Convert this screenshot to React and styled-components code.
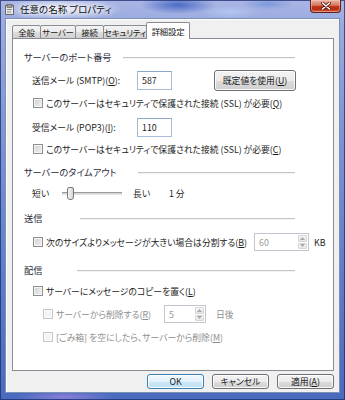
import React from 'react';
import styled, { createGlobalStyle } from 'styled-components';

const Global = createGlobalStyle`
  html, body { margin: 0; padding: 0; width: 345px; height: 400px; overflow: hidden; background: #ffffff; }
  body { font-family: "Noto Sans CJK JP", "Noto Sans", sans-serif; font-size: 8.8px; color: #1e1e1e; }
  * { box-sizing: border-box; }
`;

const Window = styled.div`
  width: 345px;
  height: 400px;
  display: flex;
  flex-direction: column;
  padding: 0 5px 7px 5px;
  box-shadow: inset 0 0 0 1px rgba(25, 45, 110, 0.75);
  background:
    radial-gradient(ellipse 62px 11px at 62px 9px, rgba(255,255,255,0.75), rgba(255,255,255,0) 100%),
    radial-gradient(ellipse 38px 9px at 178px 5px, #4b6bc6, rgba(75,107,198,0) 100%),
    radial-gradient(ellipse 30px 7px at 230px 12px, rgba(180,200,245,0.9), rgba(180,200,245,0) 100%),
    radial-gradient(ellipse 26px 6px at 268px 4px, #7c98da, rgba(124,152,218,0) 100%),
    radial-gradient(ellipse 50px 6px at 65px 397px, #8c7fd8, rgba(140,127,216,0) 100%),
    linear-gradient(180deg, #aab5e4 0%, #9cacdf 5%, #7f97d6 30%, #5d7cc8 70%, #4a6abd 100%);
`;

const TitleBar = styled.div`
  height: 18px;
  display: flex;
  align-items: flex-start;
  flex-shrink: 0;
`;

const AppIcon = styled.svg`
  width: 10px;
  height: 11px;
  margin-top: 4px;
  flex-shrink: 0;
`;

const Title = styled.div`
  margin-left: 5px;
  margin-top: 2px;
  font-size: 9.5px;
  line-height: 14px;
  color: #101010;
  text-shadow: 0 0 4px #ffffff, 0 0 6px #ffffff;
  font-feature-settings: "palt";
`;

const CloseButton = styled.div`
  margin-left: auto;
  margin-right: -1px;
  width: 31px;
  height: 13px;
  border: 1px solid #5c2118;
  border-top: none;
  border-radius: 0 0 4px 4px;
  background: linear-gradient(180deg, #eab3a4 0%, #d8765c 45%, #c2391c 50%, #b62a10 75%, #d5603f 100%);
  box-shadow: inset 0 0 0 1px rgba(255, 210, 200, 0.45);
  display: flex;
  align-items: center;
  justify-content: center;
`;

const Client = styled.div`
  flex: 1;
  display: flex;
  flex-direction: column;
  background: #f0f0f0;
  border: 1px solid #7c8fb8;
  box-shadow: inset 1px 1px 0 #ffffff;
  padding: 3px 5px 1px 4px;
`;

const TabRow = styled.div`
  display: flex;
  align-items: flex-end;
  height: 17px;
  margin-left: 2px;
  position: relative;
  z-index: 2;
`;

const Tab = styled.div`
  width: ${p => p.$w}px;
  height: ${p => (p.$active ? 17 : 14)}px;
  margin-left: ${p => (p.$first ? 0 : -1)}px;
  border: 1px solid #898c95;
  border-bottom: ${p => (p.$active ? 'none' : '1px solid #898c95')};
  border-radius: 2px 2px 0 0;
  background: ${p =>
    p.$active
      ? '#ffffff'
      : 'linear-gradient(180deg, #f3f3f3 0%, #ebebeb 50%, #dedede 50%, #d0d0d0 100%)'};
  display: flex;
  align-items: center;
  justify-content: center;
  font-size: 8.4px;
  letter-spacing: -0.2px;
  line-height: 12px;
  color: #1a1a1a;
  white-space: nowrap;
  font-feature-settings: "palt";
  ${p => (p.$active ? 'position: relative; z-index: 3;' : '')}
`;

const Panel = styled.div`
  flex: 1;
  margin: -1px 0 0 2px;
  background: #ffffff;
  border: 1px solid #898c95;
  padding: 11px 0 0 11px;
  display: flex;
  flex-direction: column;
  font-feature-settings: "palt";
`;

const SectionHeader = styled.div`
  display: grid;
  grid-template-columns: ${p => p.$line}px 1fr;
  align-items: center;
  width: 271px;
  height: 14px;
  margin-top: ${p => p.$mt}px;
`;

const HeaderLabel = styled.span`
  white-space: nowrap;
  color: #2a2a3a;
  font-size: 9.2px;
  line-height: 14px;
`;

const HeaderLine = styled.div`
  height: 1px;
  background: #c4c4c4;
  box-shadow: 0 1px 0 #f4f4f4;
`;

const Row = styled.div`
  display: flex;
  align-items: center;
  height: ${p => p.$h}px;
  margin-top: ${p => p.$mt}px;
  padding-left: ${p => p.$pl}px;
  white-space: nowrap;
`;

const FieldLabel = styled.span`
  width: ${p => p.$w}px;
  flex-shrink: 0;
  color: #1e1e1e;
`;

const TextBox = styled.div`
  width: ${p => p.$w}px;
  height: ${p => p.$h}px;
  border: 1px solid #a7bcd6;
  border-top-color: #8ca6c8;
  background: #ffffff;
  padding-left: 4px;
  display: flex;
  align-items: center;
  color: ${p => (p.$disabled ? '#9a9a9a' : '#1e1e1e')};
  flex-shrink: 0;
`;

const PushButton = styled.div`
  width: ${p => p.$w}px;
  height: ${p => p.$h}px;
  margin-left: ${p => p.$ml || 0}px;
  border: 1px solid ${p => (p.$default ? '#3c7fb1' : '#707070')};
  border-radius: 3px;
  background: ${p =>
    p.$default
      ? 'linear-gradient(180deg, #f0f8fe 0%, #e2f1fb 50%, #cde8f8 50%, #bfe0f5 100%)'
      : 'linear-gradient(180deg, #f3f3f3 0%, #ebebeb 50%, #dddddd 50%, #cfcfcf 100%)'};
  box-shadow: inset 0 0 0 1px rgba(255, 255, 255, 0.85);
  display: flex;
  align-items: center;
  justify-content: center;
  color: #1a1a1a;
  font-size: 8.8px;
  white-space: nowrap;
  flex-shrink: 0;
  font-feature-settings: "palt";
`;

const Check = styled.span`
  width: 10px;
  height: 10px;
  flex-shrink: 0;
  border: 1px solid ${p => (p.$disabled ? '#c6c6c6' : '#8f8f8f')};
  background: ${p =>
    p.$disabled
      ? '#f4f4f4'
      : 'linear-gradient(135deg, #cfcfcf 0%, #e4e4e4 60%, #f1f1f1 100%)'};
  box-shadow: inset 0 0 0 1px ${p => (p.$disabled ? '#fbfbfb' : '#f4f4f4')};
  margin-right: 3px;
`;

const CheckText = styled.span`
  width: ${p => (p.$w ? `${p.$w}px` : 'auto')};
  flex-shrink: 0;
  color: ${p => (p.$disabled ? '#8e8e8e' : '#1e1e1e')};
`;

const SliderLabel = styled.span`
  width: ${p => p.$w}px;
  flex-shrink: 0;
`;

const SliderTrack = styled.div`
  position: relative;
  width: 60px;
  height: 3px;
  margin-right: 11px;
  border-top: 1px solid #9a9a9a;
  border-bottom: 1px solid #e4e4e4;
  background: #d6d6d6;
  flex-shrink: 0;
`;

const SliderThumb = styled.div`
  position: absolute;
  left: 5px;
  top: -6px;
  width: 7px;
  height: 13px;
  border: 1px solid #7a7a7a;
  border-radius: 2px 2px 3px 3px;
  background: linear-gradient(90deg, #f4f4f4 0%, #e6e6e6 50%, #d4d4d4 100%);
`;

const Spin = styled.div`
  width: ${p => p.$w}px;
  height: 18px;
  margin-left: ${p => p.$ml}px;
  border: 1px solid #c2c7cf;
  background: #ffffff;
  display: flex;
  flex-shrink: 0;
`;

const SpinValue = styled.div`
  flex: 1;
  padding-left: 4px;
  display: flex;
  align-items: center;
  color: #9a9a9a;
`;

const SpinButtons = styled.div`
  width: 10px;
  display: flex;
  flex-direction: column;
  gap: 1px;
  padding: 1px 1px 1px 0;
`;

const SpinArrow = styled.div`
  flex: 1;
  border: 1px solid #d6d6d6;
  border-radius: 1px;
  background: linear-gradient(180deg, #f7f7f7, #e6e6e6);
  display: flex;
  align-items: center;
  justify-content: center;
`;

const Unit = styled.span`
  margin-left: ${p => p.$ml}px;
  color: ${p => (p.$disabled ? '#8e8e8e' : '#1e1e1e')};
`;

const ButtonBar = styled.div`
  display: flex;
  justify-content: flex-end;
  gap: 8px;
  height: 15px;
  margin: 3px 0 2px 0;
`;

const Tri = ({ up }) => (
  <svg width="5" height="3" viewBox="0 0 5 3">
    <path d={up ? 'M0 3 L2.5 0 L5 3 Z' : 'M0 0 L2.5 3 L5 0 Z'} fill="#a8a8a8" />
  </svg>
);

const SpinBox = ({ w, ml, value }) => (
  <Spin $w={w} $ml={ml}>
    <SpinValue>{value}</SpinValue>
    <SpinButtons>
      <SpinArrow><Tri up /></SpinArrow>
      <SpinArrow><Tri /></SpinArrow>
    </SpinButtons>
  </Spin>
);

export default function App() {
  return (
    <>
      <Global />
      <Window>
        <TitleBar>
          <AppIcon viewBox="0 0 10 11">
            <rect x="0.5" y="1.5" width="8" height="9" fill="#e8e8e8" stroke="#6a6a6a" />
            <rect x="2" y="0.5" width="5" height="3" fill="#9a9a9a" stroke="#555" strokeWidth="0.6" />
            <rect x="2" y="5" width="5" height="1" fill="#8a8a8a" />
            <rect x="2" y="7.5" width="4" height="1" fill="#8a8a8a" />
          </AppIcon>
          <Title>任意の名称 プロパティ</Title>
          <CloseButton>
            <svg width="10" height="8" viewBox="0 0 10 8">
              <path d="M1.5 1 L8.5 7 M8.5 1 L1.5 7" stroke="#5a1a10" strokeWidth="3" strokeLinecap="round" />
              <path d="M1.5 1 L8.5 7 M8.5 1 L1.5 7" stroke="#ffffff" strokeWidth="1.6" strokeLinecap="round" />
            </svg>
          </CloseButton>
        </TitleBar>
        <Client>
          <TabRow>
            <Tab $w={29} $first>全般</Tab>
            <Tab $w={36}>サーバー</Tab>
            <Tab $w={29}>接続</Tab>
            <Tab $w={44}>セキュリティ</Tab>
            <Tab $w={44} $active>詳細設定</Tab>
          </TabRow>
          <Panel>
            <SectionHeader $mt={0} $line={99}>
              <HeaderLabel>サーバーのポート番号</HeaderLabel>
              <HeaderLine />
            </SectionHeader>

            <Row $h={22} $mt={5} $pl={8}>
              <FieldLabel $w={105}>送信メール (SMTP)(<u>O</u>):</FieldLabel>
              <TextBox $w={35} $h={19}>587</TextBox>
              <PushButton $w={82} $h={21} $ml={42}>既定値を使用(<u>U</u>)</PushButton>
            </Row>

            <Row $h={14} $mt={5} $pl={9}>
              <Check />
              <CheckText>このサーバーはセキュリティで保護された接続 (SSL) が必要(<u>Q</u>)</CheckText>
            </Row>

            <Row $h={20} $mt={7} $pl={8}>
              <FieldLabel $w={105}>受信メール (POP3)(<u>I</u>):</FieldLabel>
              <TextBox $w={35} $h={19}>110</TextBox>
            </Row>

            <Row $h={14} $mt={5} $pl={9}>
              <Check />
              <CheckText>このサーバーはセキュリティで保護された接続 (SSL) が必要(<u>C</u>)</CheckText>
            </Row>

            <SectionHeader $mt={9} $line={114}>
              <HeaderLabel>サーバーのタイムアウト</HeaderLabel>
              <HeaderLine />
            </SectionHeader>

            <Row $h={16} $mt={6} $pl={8}>
              <SliderLabel $w={30}>短い</SliderLabel>
              <SliderTrack>
                <SliderThumb />
              </SliderTrack>
              <SliderLabel $w={36}>長い</SliderLabel>
              <span>1 分</span>
            </Row>

            <SectionHeader $mt={10} $line={56}>
              <HeaderLabel>送信</HeaderLabel>
              <HeaderLine />
            </SectionHeader>

            <Row $h={18} $mt={8} $pl={9}>
              <Check />
              <CheckText $w={208}>次のサイズよりメッセージが大きい場合は分割する(<u>B</u>)</CheckText>
              <SpinBox w={55} ml={0} value="60" />
              <Unit $ml={5}>KB</Unit>
            </Row>

            <SectionHeader $mt={12} $line={53}>
              <HeaderLabel>配信</HeaderLabel>
              <HeaderLine />
            </SectionHeader>

            <Row $h={14} $mt={7} $pl={9}>
              <Check />
              <CheckText>サーバーにメッセージのコピーを置く(<u>L</u>)</CheckText>
            </Row>

            <Row $h={18} $mt={7} $pl={19}>
              <Check $disabled />
              <CheckText $w={108} $disabled>サーバーから削除する(<u>R</u>)</CheckText>
              <SpinBox w={42} ml={0} value="5" />
              <Unit $ml={10} $disabled>日後</Unit>
            </Row>

            <Row $h={14} $mt={7} $pl={19}>
              <Check $disabled />
              <CheckText $disabled>[ごみ箱] を空にしたら、サーバーから削除(<u>M</u>)</CheckText>
            </Row>
          </Panel>
          <ButtonBar>
            <PushButton $w={57} $h={15} $default>OK</PushButton>
            <PushButton $w={57} $h={15}>キャンセル</PushButton>
            <PushButton $w={57} $h={15}>適用(<u>A</u>)</PushButton>
          </ButtonBar>
        </Client>
      </Window>
    </>
  );
}
